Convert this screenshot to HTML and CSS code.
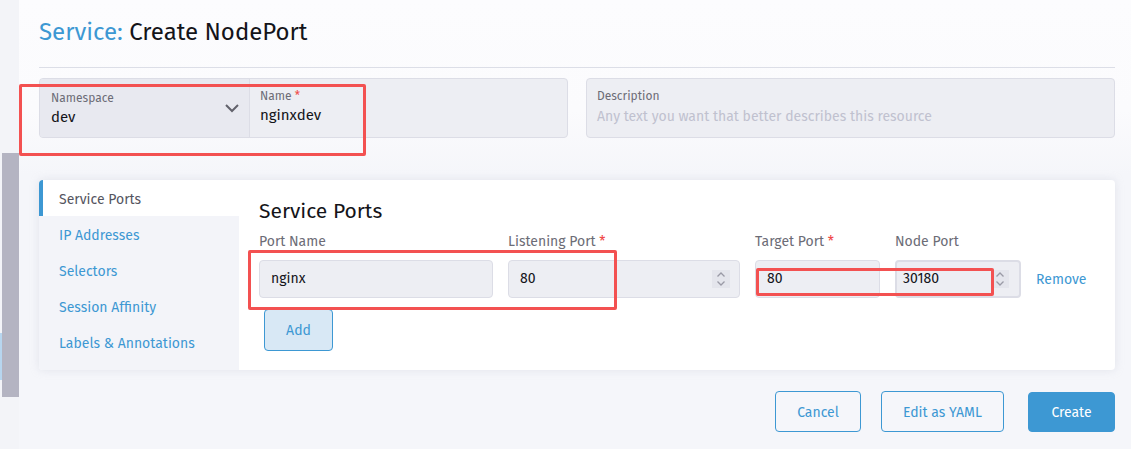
FILE: index.html
```html
<!DOCTYPE html>
<html>
<head>
<meta charset="utf-8">
<link rel="stylesheet" href="styles.css">
</head>
<body>
<div class="page">
  <aside class="rail"><span class="rail-blue"></span><span class="rail-bar"></span></aside>
  <main class="main">
    <header class="title-bar"><h1><span class="kind">Service:</span> Create NodePort</h1></header>
    <section class="top-row">
      <div class="combo">
        <div class="ns">
          <div class="ns-text">
            <div class="field-label">Namespace</div>
            <div class="field-value">dev</div>
          </div>
          <svg class="chev" width="16" height="10" viewBox="0 0 16 10"><path d="M2 2 L8 8 L14 2" fill="none" stroke="#62626c" stroke-width="2"/></svg>
        </div>
        <div class="name">
          <div class="field-label name-label">Name <span class="req">*</span></div>
          <div class="field-value">nginxdev</div>
        </div>
      </div>
      <div class="desc">
        <div class="field-label">Description</div>
        <div class="field-placeholder">Any text you want that better describes this resource</div>
      </div>
    </section>
    <section class="card">
      <nav class="tabs">
        <a class="tab active">Service Ports</a>
        <a class="tab">IP Addresses</a>
        <a class="tab">Selectors</a>
        <a class="tab">Session Affinity</a>
        <a class="tab">Labels &amp; Annotations</a>
      </nav>
      <div class="panel">
        <h2>Service Ports</h2>
        <div class="ports">
          <div class="plabel">Port Name</div>
          <div class="plabel">Listening Port <span class="req">*</span></div>
          <div class="plabel">Target Port <span class="req">*</span></div>
          <div class="plabel">Node Port</div>
          <div></div>
          <div class="input">nginx</div>
          <div class="input num">80<span class="spin"><svg width="10" height="16" viewBox="0 0 10 16"><path d="M1.5 5.5 L5 2 L8.5 5.5 M1.5 10.5 L5 14 L8.5 10.5" fill="none" stroke="#9a9aa6" stroke-width="1.3"/></svg></span></div>
          <div class="input">80</div>
          <div class="input num focus">30180<span class="spin"><svg width="10" height="16" viewBox="0 0 10 16"><path d="M1.5 5.5 L5 2 L8.5 5.5 M1.5 10.5 L5 14 L8.5 10.5" fill="none" stroke="#9a9aa6" stroke-width="1.3"/></svg></span></div>
          <a class="remove">Remove</a>
        </div>
        <button class="btn-add">Add</button>
      </div>
    </section>
    <footer class="actions">
      <button class="btn outline">Cancel</button>
      <button class="btn outline yaml">Edit as YAML</button>
      <button class="btn primary">Create</button>
    </footer>
  </main>
  <div class="mark mark-1"></div>
  <div class="mark mark-2"></div>
  <div class="mark mark-3"></div>
</div>
</body>
</html>
```

FILE: styles.css
```css
* { box-sizing: border-box; }
html, body { margin: 0; padding: 0; }
body {
  font-family: "Fira Sans", Roboto, "Noto Sans", sans-serif;
  color: #141419;
  background: #f4f5fa;
}
.page {
  position: relative;
  display: flex;
  width: 1131px;
  height: 449px;
  overflow: hidden;
}
.rail {
  width: 19px;
  flex: none;
  background: #f3f4f8;
  display: flex;
  align-items: flex-start;
  padding-top: 153px;
}
.rail-blue {
  width: 2px;
  height: 47px;
  margin-top: 180px;
  background: #b7d6ef;
}
.rail-bar {
  width: 17px;
  height: 244px;
  background: #b4b4c2;
}
.main {
  flex: 1;
  padding: 0 16px 0 20px;
  background: linear-gradient(#fcfcfe 0, #fbfbfd 110px, #f5f6fa 175px, #f5f6fa 100%);
}
.title-bar {
  border-bottom: 1px solid #dcdee7;
  height: 68px;
  padding-top: 16px;
}
h1 {
  margin: 0;
  font-size: 24px;
  font-weight: 400;
  line-height: 32px;
  color: #141419;
}
.kind { color: #3d98d3; }
.top-row {
  margin-top: 10px;
  display: grid;
  grid-template-columns: 1fr 1fr;
  gap: 18px;
  height: 60px;
}
.combo {
  display: flex;
  border: 1px solid #dcdde6;
  border-radius: 4px;
  background: #edeef3;
  overflow: hidden;
}
.ns {
  width: 210px;
  flex: none;
  background: #e8e9f0;
  border-right: 1px solid #dcdde6;
  display: flex;
  align-items: center;
  padding: 0 9px 0 11px;
}
.ns-text { flex: 1; padding-top: 1px; }
.chev { flex: none; }
.name {
  flex: 1;
  padding: 10px 11px 0 10px;
}
.desc {
  border: 1px solid #dcdde6;
  border-radius: 4px;
  background: #edeef3;
  padding: 10px 11px 0 10px;
}
.field-label {
  font-size: 12px;
  line-height: 15px;
  color: #6c6c76;
}
.field-value {
  font-size: 15px;
  line-height: 20px;
  color: #141419;
  margin-top: 1px;
}
.field-placeholder {
  font-size: 14px;
  line-height: 20px;
  color: #c0c1cf;
  margin-top: 3px;
}
.req { color: #f04a4a; }
.card {
  margin-top: 42px;
  height: 190px;
  display: flex;
  background: #fff;
  border-radius: 4px;
  box-shadow: 0 0 8px rgba(190, 192, 210, 0.35);
  overflow: hidden;
}
.tabs {
  width: 200px;
  flex: none;
  background: #f3f4f9;
  display: flex;
  flex-direction: column;
}
.tab {
  height: 36px;
  line-height: 33px;
  padding-top: 3px;
  padding-left: 20px;
  font-size: 14px;
  color: #3d98d3;
}
.tab.active {
  background: #fff;
  color: #55555f;
  border-left: 4px solid #3d98d3;
  padding-left: 16px;
}
.panel {
  flex: 1;
  padding: 17px 20px 0 20px;
}
h2 {
  margin: 0;
  font-size: 21px;
  font-weight: 400;
  line-height: 28px;
  color: #141419;
}
.ports {
  margin-top: 7px;
  display: grid;
  grid-template-columns: 234px 232px 125px 126px auto;
  column-gap: 15px;
  row-gap: 9px;
  align-items: center;
}
.plabel {
  font-size: 14px;
  line-height: 19px;
  color: #6c6c76;
}
.input {
  height: 38px;
  border: 1px solid #dcdde6;
  border-radius: 4px;
  background: #edeef3;
  font-size: 14px;
  line-height: 36px;
  padding-left: 11px;
  color: #141419;
  position: relative;
}
.input.num { display: flex; align-items: center; justify-content: space-between; padding-right: 9px; }
.input.focus { border: 2px solid #dcdde6; padding-left: 6px; padding-right: 10px; }
.spin {
  display: flex;
  align-items: center;
  justify-content: center;
  width: 18px;
  height: 18px;
  background: #e4e5ec;
}
.remove {
  font-size: 14px;
  color: #3d98d3;
}
.btn-add {
  margin: 11px 0 0 5px;
  width: 69px;
  height: 42px;
  border: 1px solid #3d98d3;
  border-radius: 4px;
  background: #d8e8f5;
  color: #3d98d3;
  font-family: inherit;
  font-size: 14px;
}
.actions {
  margin-top: 21px;
  display: flex;
  justify-content: flex-end;
  align-items: center;
}
.btn {
  height: 41px;
  border-radius: 4px;
  font-family: inherit;
  font-size: 14px;
  padding: 2px 0 0;
}
.outline {
  background: transparent;
  border: 1px solid #3d98d3;
  color: #3d98d3;
  width: 86px;
}
.yaml { width: 123px; margin-left: 20px; }
.primary {
  background: #3d98d3;
  border: 1px solid #3d98d3;
  color: #fff;
  width: 87px;
  height: 40px;
  margin-left: 24px;
}
.mark {
  position: absolute;
  border: 3px solid #f35151;
  border-radius: 2px;
  pointer-events: none;
}
.mark-1 { left: 19px; top: 84px; width: 347px; height: 72px; }
.mark-2 { left: 248px; top: 250px; width: 369px; height: 60px; }
.mark-3 { left: 756px; top: 268px; width: 238px; height: 28px; }
```
